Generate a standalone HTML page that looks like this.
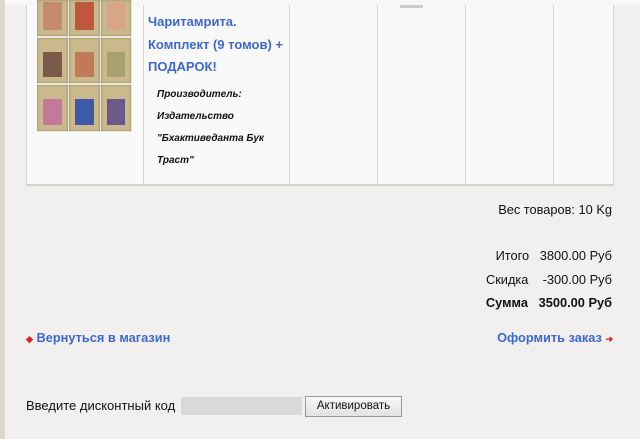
<!DOCTYPE html>
<html><head><meta charset="utf-8"><style>
body{margin:0;width:640px;height:439px;overflow:hidden;background:#f1f0ee;font-family:"Liberation Sans",Arial,sans-serif;position:relative}
.a{position:absolute;white-space:nowrap}
.edge{left:0;top:0;width:5px;height:439px;background:#ddd8cf}
.top{left:5px;top:0;width:635px;height:5px;background:#f7f7f7}
.tbl{left:26px;top:5px;width:586px;height:179px;background:#f9f9f9;border:1px solid #d4d4d4;border-top:none;box-shadow:0 1px 1px #ccc}
.vl{top:5px;width:1px;height:180px;background:#d4d4d4}
.bk{background:#c9b98c;box-shadow:inset 0 0 2px #8d7e55}
.bk i{position:absolute;left:6px;right:6px;top:8px;bottom:6px}
.t{color:#3c68d4;font-weight:bold;font-size:13px}
.m{font-style:italic;font-weight:bold;font-size:10px;color:#111}
.r{right:28px;text-align:right;font-size:12.8px;color:#111}
.lnk{color:#3c68d4;font-weight:bold;font-size:12.8px}
.ar{color:#d22;font-size:9px}
</style></head><body>
<div class="a edge"></div>
<div class="a top"></div>
<div class="a tbl"></div>
<div class="a vl" style="left:143px"></div>
<div class="a vl" style="left:289px"></div>
<div class="a vl" style="left:377px"></div>
<div class="a vl" style="left:465px"></div>
<div class="a vl" style="left:553px"></div>
<div class="a" style="left:400px;top:5px;width:23px;height:3px;background:#ccc"></div>

<div class="a" style="left:37px;top:0;width:95px;height:132px;background:#e9e6dc"></div>
<div class="a bk" style="left:37px;top:0;width:31px;height:36px"><i style="background:#c58a70;top:2px"></i></div>
<div class="a bk" style="left:69px;top:0;width:31px;height:36px"><i style="background:#c0563e;top:2px"></i></div>
<div class="a bk" style="left:101px;top:0;width:30px;height:36px"><i style="background:#d8a48a;top:2px"></i></div>
<div class="a bk" style="left:37px;top:38px;width:31px;height:45px"><i style="background:#7a5a48;top:14px"></i></div>
<div class="a bk" style="left:69px;top:38px;width:31px;height:45px"><i style="background:#c07a5a;top:14px"></i></div>
<div class="a bk" style="left:101px;top:38px;width:30px;height:45px"><i style="background:#a9a070;top:14px"></i></div>
<div class="a bk" style="left:37px;top:85px;width:31px;height:46px"><i style="background:#c37a9a;top:14px"></i></div>
<div class="a bk" style="left:69px;top:85px;width:31px;height:46px"><i style="background:#3c5aa8;top:14px"></i></div>
<div class="a bk" style="left:101px;top:85px;width:30px;height:46px"><i style="background:#6a5a8a;top:14px"></i></div>

<div class="a t" style="left:148px;top:14px">Чаритамрита.</div>
<div class="a t" style="left:148px;top:37px">Комплект (9 томов) +</div>
<div class="a t" style="left:148px;top:59px">ПОДАРОК!</div>
<div class="a m" style="left:157px;top:89px">Производитель:</div>
<div class="a m" style="left:157px;top:111px">Издательство</div>
<div class="a m" style="left:157px;top:133px">"Бхактиведанта Бук</div>
<div class="a m" style="left:157px;top:155px">Траст"</div>

<div class="a r" style="top:202px">Вес товаров: 10 Kg</div>
<div class="a r" style="top:248px">Итого&nbsp;&nbsp; 3800.00 Руб</div>
<div class="a r" style="top:272px">Скидка&nbsp;&nbsp;&nbsp; -300.00 Руб</div>
<div class="a r" style="top:295px;font-weight:bold">Сумма&nbsp;&nbsp; 3500.00 Руб</div>

<div class="a lnk" style="left:26px;top:330px"><span class="ar">&#9670;</span> Вернуться в магазин</div>
<div class="a lnk" style="right:27px;top:330px">Оформить заказ <span class="ar">&#10140;</span></div>

<div class="a" style="left:26px;top:398px;font-size:13px;color:#111">Введите дисконтный код</div>
<div class="a" style="left:181px;top:397px;width:121px;height:18px;background:#d9d9d9"></div>
<div class="a" style="left:305px;top:396px;width:95px;height:19px;background:linear-gradient(#f8f8f8,#e2e2e2);border:1px solid #999;font-size:11.5px;text-align:center;line-height:19px;color:#111">Активировать</div>
</body></html>
